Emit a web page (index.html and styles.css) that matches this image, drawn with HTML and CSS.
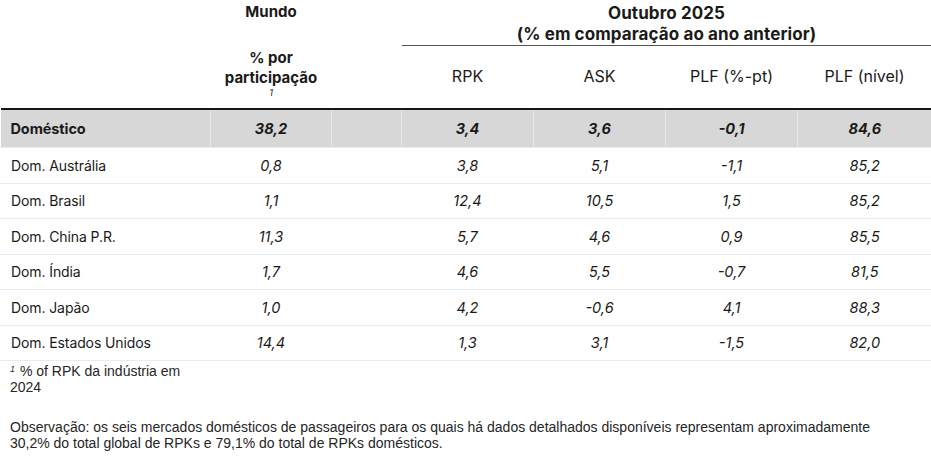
FILE: index.html
```html
<!DOCTYPE html>
<html lang="pt">
<head>
<meta charset="utf-8">
<link rel="stylesheet" href="styles.css">
</head>
<body>
<table class="tbl">
  <colgroup>
    <col class="c-name"><col class="c-share"><col class="c-gap"><col class="c-num"><col class="c-num"><col class="c-num"><col class="c-last">
  </colgroup>
  <thead>
    <tr class="h1">
      <th></th>
      <th class="top">Mundo</th>
      <th></th>
      <th colspan="4" class="period">Outubro 2025<br>(% em comparação ao ano anterior)</th>
    </tr>
    <tr class="h2">
      <th></th>
      <th class="share"><span class="ln">% por</span><span class="ln">participação</span><span class="sup">1</span></th>
      <th></th>
      <th class="metric">RPK</th>
      <th class="metric">ASK</th>
      <th class="metric">PLF (%-pt)</th>
      <th class="metric">PLF (nível)</th>
    </tr>
  </thead>
  <tbody>
    <tr class="total">
      <td class="name">Doméstico</td><td>38,2</td><td></td><td>3,4</td><td>3,6</td><td>-0,1</td><td>84,6</td>
    </tr>
    <tr>
      <td class="name">Dom. Austrália</td><td>0,8</td><td></td><td>3,8</td><td>5,1</td><td>-1,1</td><td>85,2</td>
    </tr>
    <tr>
      <td class="name">Dom. Brasil</td><td>1,1</td><td></td><td>12,4</td><td>10,5</td><td>1,5</td><td>85,2</td>
    </tr>
    <tr>
      <td class="name">Dom. China P.R.</td><td>11,3</td><td></td><td>5,7</td><td>4,6</td><td>0,9</td><td>85,5</td>
    </tr>
    <tr>
      <td class="name">Dom. Índia</td><td>1,7</td><td></td><td>4,6</td><td>5,5</td><td>-0,7</td><td>81,5</td>
    </tr>
    <tr>
      <td class="name">Dom. Japão</td><td>1,0</td><td></td><td>4,2</td><td>-0,6</td><td>4,1</td><td>88,3</td>
    </tr>
    <tr>
      <td class="name">Dom. Estados Unidos</td><td>14,4</td><td></td><td>1,3</td><td>3,1</td><td>-1,5</td><td>82,0</td>
    </tr>
  </tbody>
</table>
<p class="footnote"><span class="fn-mark">1</span> <span>% of RPK da indústria em</span><br><span>2024</span></p>
<p class="note">Observação: os seis mercados domésticos de passageiros para os quais há dados detalhados disponíveis representam aproximadamente 30,2% do total global de RPKs e 79,1% do total de RPKs domésticos.</p>
</body>
</html>
```

FILE: styles.css
```css
html, body {
  margin: 0;
  padding: 0;
  background: #ffffff;
}

body {
  font-family: Inter, "Noto Sans", sans-serif;
  color: #1a1a1a;
  width: 931px;
}

.tbl {
  width: 931px;
  border-collapse: collapse;
  table-layout: fixed;
  font-size: 14px;
}

.c-name { width: 210px; }
.c-share { width: 121px; }
.c-gap { width: 70px; }
.c-num { width: 132px; }
.c-last { width: 134px; }

.tbl th {
  padding: 0;
  font-weight: 700;
  text-align: center;
  vertical-align: top;
}

.h1 th {
  height: 44px;
}

.h1 .top {
  height: 42px;
  padding-top: 2px;
  line-height: 20px;
  font-size: 15px;
}

.h1 .period {
  height: 41px;
  border-bottom: 1px solid #555;
  padding-top: 3px;
  line-height: 21px;
  font-size: 17px;
  letter-spacing: 0.1px;
}

.h2 th {
  height: 62px;
  border-bottom: 2px solid #161616;
}

.h2 .share {
  height: 60px;
  font-size: 15px;
  line-height: 20px;
  padding-top: 2px;
}

.ln {
  display: block;
}

.sup {
  display: block;
  font-size: 9px;
  font-style: italic;
  line-height: 10px;
  font-weight: 400;
}

.h2 .metric {
  height: 42px;
  font-weight: 400;
  font-size: 16px;
  line-height: 20px;
  padding-top: 20px;
}

.tbl td {
  height: 34.5px;
  padding: 0;
  text-align: center;
  font-style: italic;
  font-size: 14.5px;
  border-bottom: 1px solid #e6ecf4;
  border-left: 1px solid transparent;
}

.tbl td.name {
  text-align: left;
  padding-left: 10px;
  font-style: normal;
  font-size: 14px;
  letter-spacing: -0.1px;
}

.total td {
  background: #d7d7d7;
  font-weight: 700;
  height: 37px;
  border-left: 1px solid #e6e6e6;
}

.total td.name {
  border-left: none;
  font-size: 14.5px;
}

.footnote {
  margin: 0;
  width: 190px;
  padding: 2px 0 0 10px;
  font-family: "Liberation Sans", Arial, sans-serif;
  font-size: 14px;
  line-height: 16px;
  color: #262626;
}

.fn-mark {
  font-size: 9px;
  font-style: italic;
  vertical-align: top;
  line-height: 12px;
  margin-right: 1px;
}

.note {
  width: 890px;
  margin: 24px 0 0 0;
  padding-left: 10px;
  font-family: "Liberation Sans", Arial, sans-serif;
  font-size: 14px;
  line-height: 16px;
  color: #262626;
}
```
